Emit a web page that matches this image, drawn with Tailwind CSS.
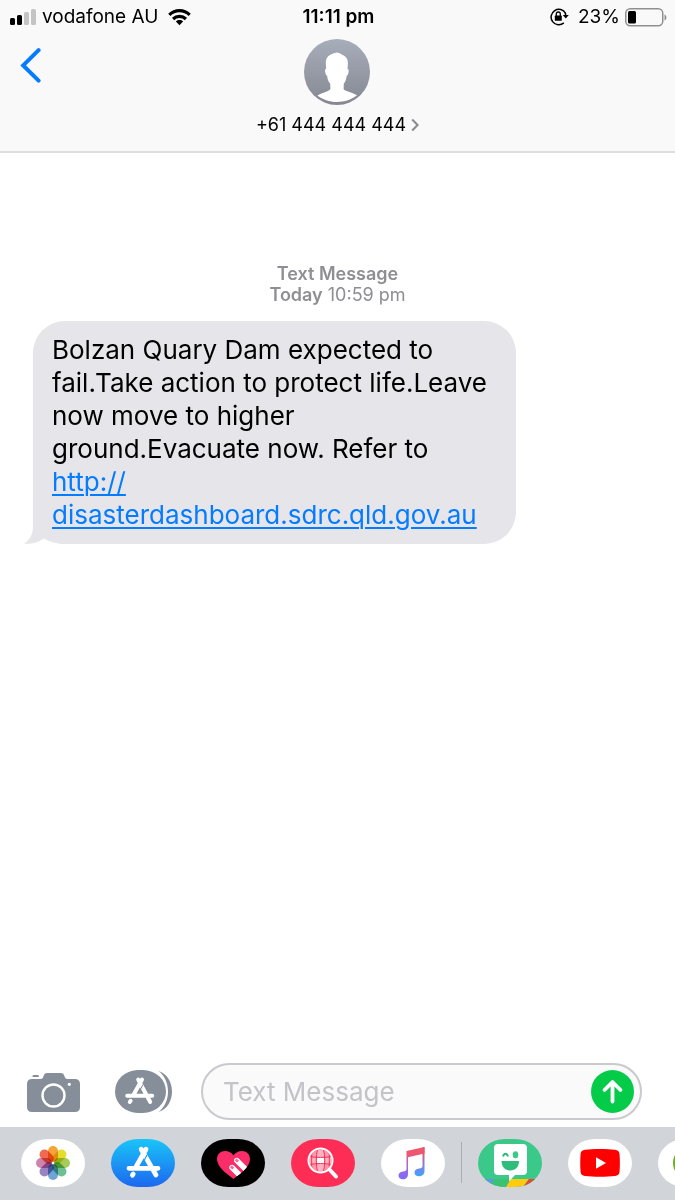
<!DOCTYPE html>
<html lang="en">
<head>
    <meta charset="UTF-8">
    <meta name="viewport" content="width=device-width, initial-scale=1.0">
    <title>Messages</title>
    <script src="https://cdn.jsdelivr.net/npm/@tailwindcss/browser@4"></script>
</head>
<body class="bg-white text-black font-['Inter',sans-serif] flex flex-col min-h-screen overflow-x-hidden">

    <!-- Header -->
    <header class="bg-[#f9f9f9] border-b-2 border-[#dededf]">
        <div class="grid grid-cols-3 items-center h-[34px] pl-[10px] pr-2 text-[19px]">
            <div class="flex items-center gap-[6px] whitespace-nowrap">
                <svg class="w-[26px] h-[17px] shrink-0" viewBox="0 0 26 17">
                    <rect x="0" y="9" width="5" height="7" rx="1.5" fill="#000"/>
                    <rect x="7" y="6" width="5" height="10" rx="1.5" fill="#000"/>
                    <rect x="14" y="3" width="5" height="13" rx="1.5" fill="#c4c4c4"/>
                    <rect x="21" y="0" width="5" height="16" rx="1.5" fill="#c4c4c4"/>
                </svg>
                <span>vodafone AU</span>
                <svg class="w-[23px] h-[17px] ml-1 shrink-0" viewBox="0 0 24 18">
                    <g fill="none" stroke="#000" stroke-width="3.4">
                        <path d="M1.200 6.200C7.200 .2 16.800 .2 22.800 6.200"/>
                        <path d="M5.200 10.600c3.800-3.600 9.800-3.600 13.600 0"/>
                    </g>
                    <path d="M8.200 13.200c2.200-2 5.400-2 7.600 0L12 17.200z" fill="#000"/>
                </svg>
            </div>
            <div class="text-center font-semibold whitespace-nowrap">11:11 pm</div>
            <div class="flex items-center justify-end gap-[5px]">
                <svg class="w-[19px] h-[18px] mr-1" viewBox="0 0 19 18">
                    <path d="M15.600 5.400A7.700 7.700 0 1 0 13.800 14.900" fill="none" stroke="#000" stroke-width="1.500"/>
                    <path d="M15.500 5v4" stroke="#000" stroke-width="1.500"/>
                    <path d="M12.800 7h6l-3 3.600z" fill="#000"/>
                    <rect x="4.800" y="7.600" width="7" height="5.200" rx=".6" fill="#000"/>
                    <path d="M6.300 8V6a2 2 0 0 1 4 0V8" fill="none" stroke="#000" stroke-width="1.300"/>
                </svg>
                <span>23%</span>
                <svg class="w-[42px] h-[19px]" viewBox="0 0 42 19">
                    <rect x=".75" y=".75" width="37" height="17" rx="4.500" fill="none" stroke="#8f8f8f" stroke-width="1.500"/>
                    <rect x="3" y="3" width="8" height="12.500" rx="1.500" fill="#000"/>
                    <path d="M39.500 6.500c2.600 1.400 2.600 4.600 0 6z" fill="#8f8f8f"/>
                </svg>
            </div>
        </div>
        <div class="grid grid-cols-[1fr_auto_1fr] items-start px-5 pt-[5px] pb-[14px]">
            <button type="button" aria-label="Back" class="w-[22px] mt-2">
                <svg class="w-[22px] h-9" viewBox="0 0 22 36">
                    <path d="M18.600 3.200L3.200 18.400l15.400 15.200" fill="none" stroke="#047cff" stroke-width="4" stroke-linecap="round" stroke-linejoin="miter"/>
                </svg>
            </button>
            <button type="button" class="flex flex-col items-center gap-2">
                <svg class="w-[66px] h-[66px]" viewBox="0 0 66 66">
                    <defs>
                        <linearGradient id="avatar" x1="0" y1="0" x2="0" y2="1">
                            <stop offset="0" stop-color="#a7adba"/>
                            <stop offset="1" stop-color="#858892"/>
                        </linearGradient>
                    </defs>
                    <circle cx="33" cy="33" r="33" fill="url(#avatar)"/>
                    <path d="M33 13.500c-3 .4-5 1.600-7 2.500-2.800 1.300-4.200 4-4.200 8l.3 5.800c-1.600.3-1.100 2.600-.6 4.400.3 1.400.8 2.300 1.600 2.400.3 3.600 1.200 6 3.100 8.200l.2 5.200c-.6 2.200-8.200 3.600-13 6.500C18.600 60.600 25.500 63 33 63s14.800-2.600 20-6.700c-4.800-3.300-12.800-4.100-13.400-6.300l.2-5.200c1.800-2.200 2.500-4.600 2.900-8.200.8-.1 1.300-1 1.600-2.400.4-1.800.8-3.900-.7-4.200l.3-5.700c0-4-1.400-6.500-4.200-7.800-2-.9-4-2.600-6.700-3z" fill="#fff"/>
                </svg>
                <span class="flex items-center gap-[5px] text-lg leading-6 whitespace-nowrap">+61 444 444 444
                    <svg class="w-2 h-[14px]" viewBox="0 0 8 14"><path d="M1.200 1.500L6.600 7l-5.400 5.500" fill="none" stroke="#8a8a8f" stroke-width="2"/></svg>
                </span>
            </button>
        </div>
    </header>

    <!-- Conversation -->
    <main class="grow pt-[110px] pl-[33px] pr-[33px]">
        <div class="text-center text-[#8e8e93] leading-[21px] text-lg">
            <p class="font-semibold">Text Message</p>
            <p><span class="font-semibold">Today</span> 10:59 pm</p>
        </div>
        <div class="relative mt-4 w-fit max-w-[483px] rounded-[32px] bg-[#e5e5ea] pt-3 pb-[13px] pl-[19px] pr-4 text-[26px] leading-[33px]">
            <!-- bubble tail -->
            <svg class="absolute -left-[9px] bottom-0 w-[43px] h-[34px]" viewBox="0 0 43 34">
                <path d="M9 0v16c0 8-3 14-9 17.600 8 .8 14-1.200 20-5.100C25 32 34 34 43 34V0z" fill="#e5e5ea"/>
            </svg>
            <p class="relative">Bolzan Quary Dam expected to fail.Take action to protect life.Leave now move to higher ground.Evacuate now. Refer to <a href="http://disasterdashboard.sdrc.qld.gov.au" class="text-[#047cff] underline decoration-2 underline-offset-3">http://<wbr>disasterdashboard.sdrc.qld.gov.au</a></p>
        </div>
    </main>

    <!-- Compose row -->
    <form class="flex items-center pl-[27px] pr-[33px] pb-[7px]">
        <button type="button" aria-label="Camera" class="mr-[35px] shrink-0">
            <svg class="w-[53px] h-10" viewBox="0 0 53 40">
                <path d="M5.500 4.500C5.500 3.300 6.200 3 7.200 3h3c1 0 1.600.4 1.600 1.500V5H5.500z" fill="#868e99"/>
                <path d="M5 7h8.500c1.500 0 2.300-.8 2.800-2.200C17.200 2 18 1 20.500 1h13c2.500 0 3.300.8 4.200 3.800C38.200 6.200 39 7 40.500 7H48c3.200 0 5 1.800 5 5v23c0 3.200-1.800 5-5 5H5c-3.200 0-5-1.800-5-5V12c0-3.200 1.800-5 5-5z" fill="#868e99"/>
                <circle cx="26.500" cy="23.500" r="11" fill="none" stroke="#fff" stroke-width="2.400"/>
                <circle cx="42.300" cy="12.300" r="1.600" fill="#fff"/>
            </svg>
        </button>
        <button type="button" aria-label="Apps" class="mr-[29px] shrink-0">
            <svg class="w-[57px] h-[43px]" viewBox="0 0 57 43">
                <rect width="51" height="43" rx="23" ry="21.500" fill="#868e99"/>
                <path d="M43.500 1C52 3.500 57 12 57 21.500S52 39.500 43.500 42C49.500 37.500 53 30 53 21.500S49.500 5.500 43.500 1z" fill="#868e99"/>
                <g fill="none" stroke="#fff" stroke-width="4" stroke-linecap="round">
                    <path d="M27 9.500L18.700 24.500M23.200 9.500l12 22.500M12.200 25.800h25M15.600 30.800l-.8 1.200"/>
                </g>
                <path d="M28 14.500l-4.200 8" stroke="#868e99" stroke-width="1"/>
            </svg>
        </button>
        <div class="flex grow items-center min-w-0 h-[57px] rounded-full border-2 border-[#c9c9ce] bg-[#fafafa] pl-5 pr-[6px]">
            <input type="text" aria-label="Text Message" placeholder="Text Message" class="grow min-w-0 h-10 bg-transparent text-[26px] outline-none placeholder:text-[#c3c3c8]">
            <button type="submit" aria-label="Send" class="shrink-0">
                <svg class="w-[43px] h-[43px]" viewBox="0 0 43 43">
                    <circle cx="21.500" cy="21.500" r="21.500" fill="#04cb48"/>
                    <path d="M21.500 31.500V12.500M13.500 20l8-8 8 8" fill="none" stroke="#fff" stroke-width="3.800" stroke-linecap="round" stroke-linejoin="round"/>
                </svg>
            </button>
        </div>
    </form>

    <!-- App strip -->
    <nav class="flex h-[73px] items-center overflow-hidden bg-[#d1d4d9] pl-[21px] pb-[2px]">
        <div class="flex gap-[26px] shrink-0">
            <button type="button" aria-label="Photos">
                <svg class="w-16 h-12" viewBox="0 0 64 48">
                    <rect width="64" height="48" rx="27" ry="24" fill="#fff"/>
                    <g class="mix-blend-multiply">
                        <rect class="mix-blend-multiply" x="27" y="7" width="10" height="16" rx="5" fill="#f6a33b"/>
                        <rect class="mix-blend-multiply" x="27" y="7" width="10" height="16" rx="5" fill="#e5dc2c" transform="rotate(45 32 24)"/>
                        <rect class="mix-blend-multiply" x="27" y="7" width="10" height="16" rx="5" fill="#a6cb5b" transform="rotate(90 32 24)"/>
                        <rect class="mix-blend-multiply" x="27" y="7" width="10" height="16" rx="5" fill="#6fbf95" transform="rotate(135 32 24)"/>
                        <rect class="mix-blend-multiply" x="27" y="7" width="10" height="16" rx="5" fill="#6ea4d6" transform="rotate(180 32 24)"/>
                        <rect class="mix-blend-multiply" x="27" y="7" width="10" height="16" rx="5" fill="#9a84bf" transform="rotate(225 32 24)"/>
                        <rect class="mix-blend-multiply" x="27" y="7" width="10" height="16" rx="5" fill="#d183b0" transform="rotate(270 32 24)"/>
                        <rect class="mix-blend-multiply" x="27" y="7" width="10" height="16" rx="5" fill="#ef6a4e" transform="rotate(315 32 24)"/>
                    </g>
                    <circle cx="32" cy="24" r="1.200" fill="#fff"/>
                </svg>
            </button>
            <button type="button" aria-label="App Store">
                <svg class="w-16 h-12" viewBox="0 0 64 48">
                    <defs>
                        <linearGradient id="store" x1="0" y1="0" x2="0" y2="1">
                            <stop offset="0" stop-color="#19c5f8"/>
                            <stop offset="1" stop-color="#1d67ef"/>
                        </linearGradient>
                    </defs>
                    <rect width="64" height="48" rx="27" ry="24" fill="url(#store)"/>
                    <g fill="none" stroke="#fff" stroke-width="4.800" stroke-linecap="round">
                        <path d="M35 10.200L25.200 27.500M30.200 10.200l14.800 25.800M18 29.300h29M22.200 35l-.8 1.200"/>
                    </g>
                    <path d="M36 16l-5 9.500" stroke="#1e9af5" stroke-width="1.200"/>
                </svg>
            </button>
            <button type="button" aria-label="Digital Touch">
                <svg class="w-16 h-12" viewBox="0 0 64 48">
                    <defs>
                        <clipPath id="heart"><path d="M32.500 40C25 34.500 16 27.500 16 20c0-5 3.600-8 8-8 3.800 0 6.500 1.600 8.500 4.500C34.500 13.600 37.200 12 41 12c4.400 0 8 3 8 8 0 7.500-9 14.500-16.500 20z"/></clipPath>
                    </defs>
                    <rect width="64" height="48" rx="27" ry="24" fill="#000"/>
                    <path d="M32.500 40C25 34.500 16 27.500 16 20c0-5 3.600-8 8-8 3.800 0 6.500 1.600 8.500 4.500C34.500 13.600 37.200 12 41 12c4.400 0 8 3 8 8 0 7.500-9 14.500-16.500 20z" fill="#fb2d69"/>
                    <g clip-path="url(#heart)">
                        <path d="M35.800 21.500L50 35.500M31 28.500L44 41.500" stroke="#fff" stroke-width="5.400" stroke-linecap="round"/>
                        <path d="M33.800 21.200l1.800-1.800 2.400 2.300-1.900 1.900zM29 28.200l1.800-1.800 2.400 2.300-1.900 1.900z" fill="#f7668f"/>
                    </g>
                </svg>
            </button>
            <button type="button" aria-label="Image search">
                <svg class="w-16 h-12" viewBox="0 0 64 48">
                    <defs>
                        <clipPath id="globe"><circle cx="29.500" cy="21.500" r="11"/></clipPath>
                    </defs>
                    <rect width="64" height="48" rx="27" ry="24" fill="#fe2d55"/>
                    <path d="M38.500 30.500l6.500 7" stroke="#fff" stroke-width="4" stroke-linecap="round"/>
                    <circle cx="29.500" cy="21.500" r="11" fill="#ff97ab"/>
                    <g clip-path="url(#globe)">
                        <path d="M25.800 11h7.400v7h-7.400zM19 18h6.800v7H19zM33.200 18H40v7h-6.800zM25.800 25h7.400v8h-7.400z" fill="#ffb3c1"/>
                        <path d="M26 18h7v7h-7z" fill="#fff"/>
                        <path d="M26.600 10c-1.800 7-1.800 16 0 23M32.400 10c1.800 7 1.800 16 0 23M18 17.500c7 1.300 16 1.300 23 0M18 25.500c7-1.300 16-1.300 23 0M21 10c-.5 8-.5 16 0 23M38 10c.5 8 .5 16 0 23" fill="none" stroke="#fe2d55" stroke-width="1"/>
                    </g>
                    <circle cx="29.500" cy="21.500" r="12" fill="none" stroke="#fff" stroke-width="2"/>
                </svg>
            </button>
            <button type="button" aria-label="Music">
                <svg class="w-16 h-12" viewBox="0 0 64 48">
                    <defs>
                        <linearGradient id="noteLeft" gradientUnits="userSpaceOnUse" x1="0" y1="8" x2="0" y2="40">
                            <stop offset="0.200" stop-color="#f1566f"/>
                            <stop offset="0.600" stop-color="#a765dd"/>
                            <stop offset="1" stop-color="#7d6bfa"/>
                        </linearGradient>
                        <linearGradient id="noteRight" gradientUnits="userSpaceOnUse" x1="0" y1="8" x2="0" y2="37">
                            <stop offset="0.200" stop-color="#e4566f"/>
                            <stop offset="0.600" stop-color="#8f7ad8"/>
                            <stop offset="1" stop-color="#3ba5fb"/>
                        </linearGradient>
                    </defs>
                    <rect width="64" height="48" rx="27" ry="24" fill="#fff"/>
                    <path d="M25.500 12L43.500 8v6.500L27 18.200V35c0 3.500-2.200 5.300-5.200 5.300-2.500 0-4.300-1.500-4.300-3.700 0-2.400 1.800-3.500 4.500-4 2.700-.4 3.500-.8 3.500-2.600z" fill="url(#noteLeft)"/>
                    <path d="M41.500 13.500V27c0 1.800-.9 2.200-3.500 2.600-2.700.5-4.500 1.600-4.500 4 0 2.200 1.800 3.700 4.300 3.700 3 0 5.700-1.800 5.700-5.300V8l-2 .5z" fill="url(#noteRight)"/>
                </svg>
            </button>
        </div>
        <div class="mx-4 h-[41px] w-px shrink-0 bg-[#aaadb2]"></div>
        <div class="flex gap-[26px] shrink-0">
            <button type="button" aria-label="Bitmoji">
                <svg class="w-16 h-12" viewBox="0 0 64 48">
                    <defs>
                        <clipPath id="pill"><rect width="64" height="48" rx="27" ry="24"/></clipPath>
                    </defs>
                    <g clip-path="url(#pill)">
                        <rect width="64" height="48" fill="#3bc98a"/>
                        <path d="M0 40h17l-5 8H0z" fill="#5a9be0"/>
                        <path d="M17 40h18l-6 8H10z" fill="#3bc172"/>
                        <path d="M33 40h18l-6 8H28z" fill="#fdcb10"/>
                        <path d="M51 40h13v8H45z" fill="#dd4c37"/>
                    </g>
                    <path d="M20 5h25c2.600 0 4 1.400 4 4v23c0 2.600-1.400 4-4 4h-8l-6 6.500V36H20c-2.600 0-4-1.400-4-4V9c0-2.600 1.400-4 4-4z" fill="#fff"/>
                    <path d="M25 17.500c1.200-3.600 3.800-3.600 5 0" fill="none" stroke="#2eb877" stroke-width="2"/>
                    <ellipse cx="37.500" cy="15.800" rx="2.800" ry="3.500" fill="#3bc98a"/>
                    <path d="M23.500 22h17.500c0 5.800-3.500 9.500-8.700 9.500S23.500 27.800 23.500 22z" fill="#2ebd7b"/>
                </svg>
            </button>
            <button type="button" aria-label="YouTube">
                <svg class="w-16 h-12" viewBox="0 0 64 48">
                    <rect width="64" height="48" rx="27" ry="24" fill="#fff"/>
                    <path d="M17 10.800c8-1 22-1 30 0 2.800.3 4.200 1.700 4.500 4.200.5 5 .5 13 0 18-.3 2.500-1.700 3.700-4.500 4-8 1-22 1-30 0-2.800-.3-4.100-1.500-4.400-4-.5-5-.5-13 0-18 .3-2.500 1.600-3.900 4.400-4.200z" fill="#fe0000"/>
                    <path d="M28 18.200L38 24l-10 5.800z" fill="#fff"/>
                </svg>
            </button>
            <button type="button" aria-label="More apps">
                <svg class="w-16 h-12" viewBox="0 0 64 48">
                    <rect width="64" height="48" rx="27" ry="24" fill="#fff"/>
                    <circle cx="32" cy="24" r="17" fill="#67b21c"/>
                </svg>
            </button>
        </div>
    </nav>

</body>
</html>
